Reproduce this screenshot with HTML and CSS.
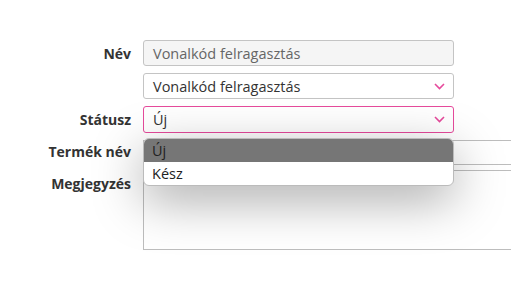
FILE: index.html
```html
<!DOCTYPE html>
<html lang="hu">
<head>
  <meta charset="UTF-8" />
  <meta name="viewport" content="width=device-width, initial-scale=1" />
  <title>Feladat</title>
  <link rel="stylesheet" href="styles.css">
</head>
<body>
  <form class="form">
    <label class="label">Név</label>
    <div class="field">
      <div class="input disabled">Vonalkód felragasztás</div>
    </div>

    <span class="label"></span>
    <div class="field">
      <div class="input select">
        Vonalkód felragasztás
        <svg class="chevron" width="11" height="7" viewBox="0 0 11 7"><path d="M1 1l4.5 4.5L10 1" fill="none" stroke="#e64a9c" stroke-width="1.6"/></svg>
      </div>
    </div>

    <label class="label">Státusz</label>
    <div class="field">
      <div class="input select focused">
        Új
        <svg class="chevron" width="11" height="7" viewBox="0 0 11 7"><path d="M1 1l4.5 4.5L10 1" fill="none" stroke="#e64a9c" stroke-width="1.6"/></svg>
      </div>
      <ul class="options">
        <li class="option active">Új</li>
        <li class="option">Kész</li>
      </ul>
    </div>

    <label class="label">Termék név</label>
    <div class="field">
      <div class="input wide"></div>
    </div>

    <label class="label top">Megjegyzés</label>
    <div class="field">
      <div class="textarea wide"></div>
    </div>
  </form>
</body>
</html>
```

FILE: styles.css
```css
* {
  box-sizing: border-box;
}
body {
  margin: 0;
  background: #fff;
  font-family: 'Open Sans', 'Noto Sans', sans-serif;
  font-size: 14px;
  color: #333;
  width: 511px;
  height: 294px;
  overflow: hidden;
}

/* Form grid */
.form {
  display: grid;
  grid-template-columns: 131px 368px;
  column-gap: 12px;
  row-gap: 7px;
  padding-top: 40px;
}
.label {
  font-weight: 700;
  color: #333;
  text-align: right;
  align-self: center;
  white-space: nowrap;
}
.label.top {
  align-self: start;
  padding-top: 4px;
}
.field {
  position: relative;
}

/* Inputs */
.input {
  width: 311px;
  height: 26px;
  border: 1px solid #c4c4c4;
  border-radius: 3px;
  background: #fff;
  padding: 0 9px;
  display: flex;
  align-items: center;
  color: #333;
  font-size: 14.5px;
}
.input.disabled {
  background: #f5f5f5;
  color: #666;
}
.input.select {
  justify-content: space-between;
}
.input.focused {
  border-color: #e64a9c;
  height: 27px;
}
.chevron {
  margin-right: -1px;
}
.input.wide {
  width: 368px;
  height: 25px;
  border-color: #bdbdbd;
  border-right: none;
  border-radius: 0;
}
.form .field:nth-child(8) {
  margin-bottom: -2px;
}
.textarea {
  height: 80px;
  border: 1px solid #bdbdbd;
  background: #fff;
}
.textarea.wide {
  width: 368px;
  border-right: none;
}

/* Open dropdown list */
.options {
  position: absolute;
  left: 0;
  top: 32px;
  z-index: 10;
  width: 311px;
  margin: 0;
  padding: 0;
  list-style: none;
  background: #fff;
  border: 1px solid #bbb;
  border-radius: 6px;
  overflow: hidden;
  box-shadow: 0 14px 50px rgba(0, 0, 0, 0.34);
}
.option {
  height: 23px;
  line-height: 23px;
  padding: 0 8px;
  color: #222;
  font-size: 14.5px;
}
.option.active {
  background: #767676;
  color: #222;
}
```
